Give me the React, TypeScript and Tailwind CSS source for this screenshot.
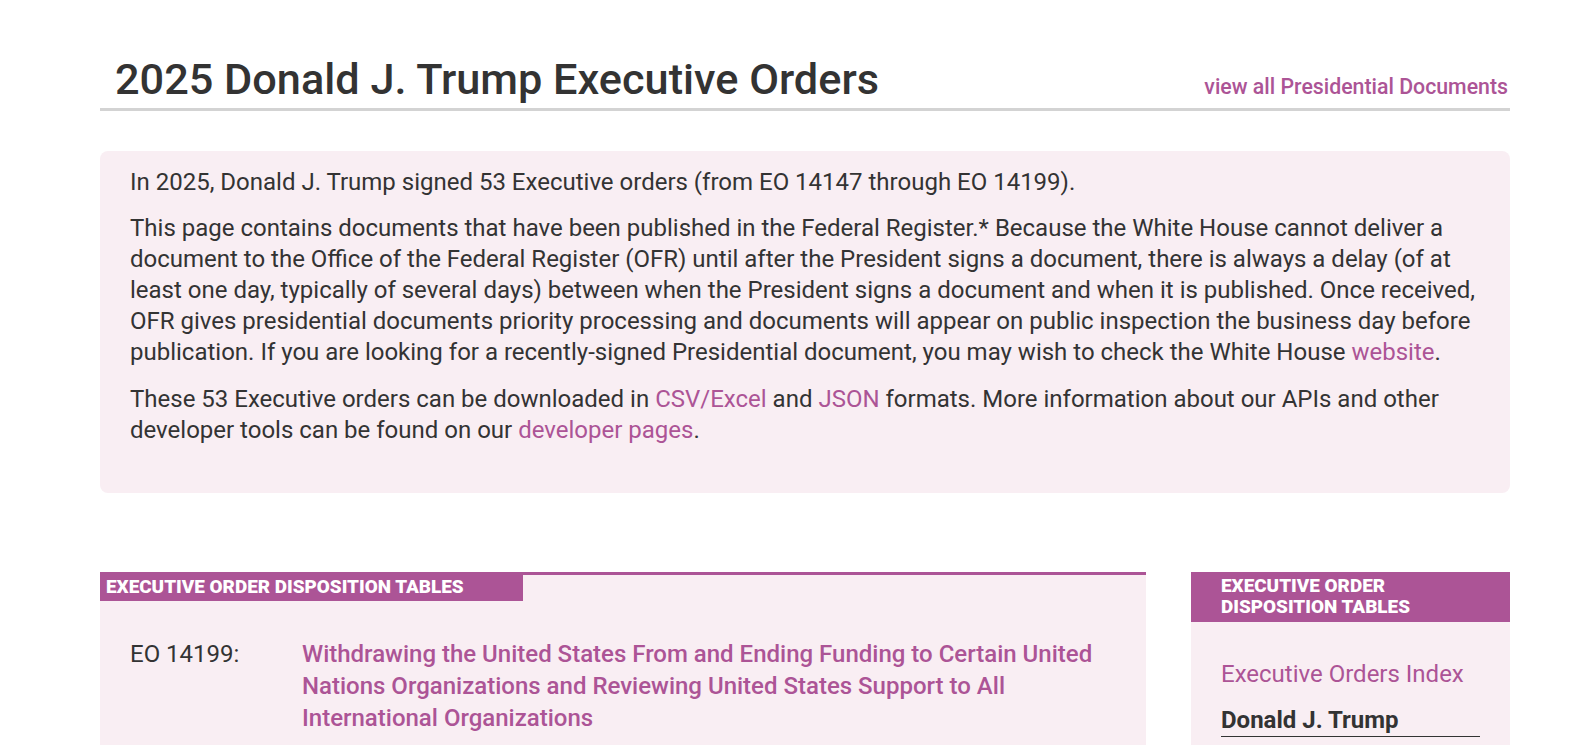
import React from "react";

const LINK = "text-[#ac5496]";

export default function App() {
  return (
    <div className="min-h-[745px] bg-white font-['Roboto',sans-serif] text-[#333]">
      <div className="ml-[100px] w-[1410px]">
        <div className="flex items-baseline justify-between border-b-[3px] border-[#d3d3d3] pt-[54px] pb-[2px]">
          <h1 className="pl-[15px] text-[43.25px] font-medium leading-[52px]">
            2025 Donald J. Trump Executive Orders
          </h1>
          <a className={`pr-[2px] text-[21.3px] font-medium ${LINK}`}>
            view all Presidential Documents
          </a>
        </div>

        <div className="mt-[40px] rounded-[8px] bg-[#f9eef3] px-[30px] pt-[15.5px] pb-[47px] text-[24px] leading-[31px]">
          <p>
            In 2025, Donald J. Trump signed 53 Executive orders (from EO 14147 through EO 14199).
          </p>
          <p className="mt-[15.7px]">
            This page contains documents that have been published in the Federal Register.* Because
            the White House cannot deliver a document to the Office of the Federal Register (OFR)
            until after the President signs a document, there is always a delay (of at least one day,
            typically of several days) between when the President signs a document and when it is
            published. Once received, OFR gives presidential documents priority processing and
            documents will appear on public inspection the business day before publication. If you
            are looking for a recently-signed Presidential document, you may wish to check the White
            House <a className={LINK}>website</a>.
          </p>
          <p className="mt-[15.7px]">
            These 53 Executive orders can be downloaded in <a className={LINK}>CSV/Excel</a> and{" "}
            <a className={LINK}>JSON</a> formats. More information about our APIs and other developer
            tools can be found on our <a className={LINK}>developer pages</a>.
          </p>
        </div>

        <div className="mt-[79px] flex gap-[45px]">
          <div className="w-[1046px] border-t-[3px] border-[#ac5496] bg-[#f9eef3]">
            <div className="h-[26px] w-[423px] bg-[#ac5496] pl-[6px] text-[18.9px] font-black uppercase leading-[23px] text-white">
              Executive Order Disposition Tables
            </div>
            <div className="flex pl-[30px] pr-[20px] pt-[37px] pb-[20px]">
              <div className="w-[172px] shrink-0 text-[24px] leading-[32px]">EO 14199:</div>
              <a className={`text-[24px] font-medium leading-[32px] ${LINK}`}>
                Withdrawing the United States From and Ending Funding to Certain United Nations
                Organizations and Reviewing United States Support to All International Organizations
              </a>
            </div>
          </div>

          <div className="w-[319px] bg-[#f9eef3]">
            <div className="bg-[#ac5496] px-[30px] pt-[4.5px] pb-[4.5px] text-[18.9px] font-black uppercase leading-[20.5px] text-white">
              Executive Order
              <br />
              Disposition Tables
            </div>
            <div className="px-[30px] pt-[37px]">
              <a className={`block text-[24px] leading-[30px] ${LINK}`}>Executive Orders Index</a>
              <div className="mt-[16px] border-b border-[#333] pb-[1px] text-[24px] font-bold leading-[30px] text-[#333]">
                Donald J. Trump
              </div>
            </div>
          </div>
        </div>
      </div>
    </div>
  );
}
